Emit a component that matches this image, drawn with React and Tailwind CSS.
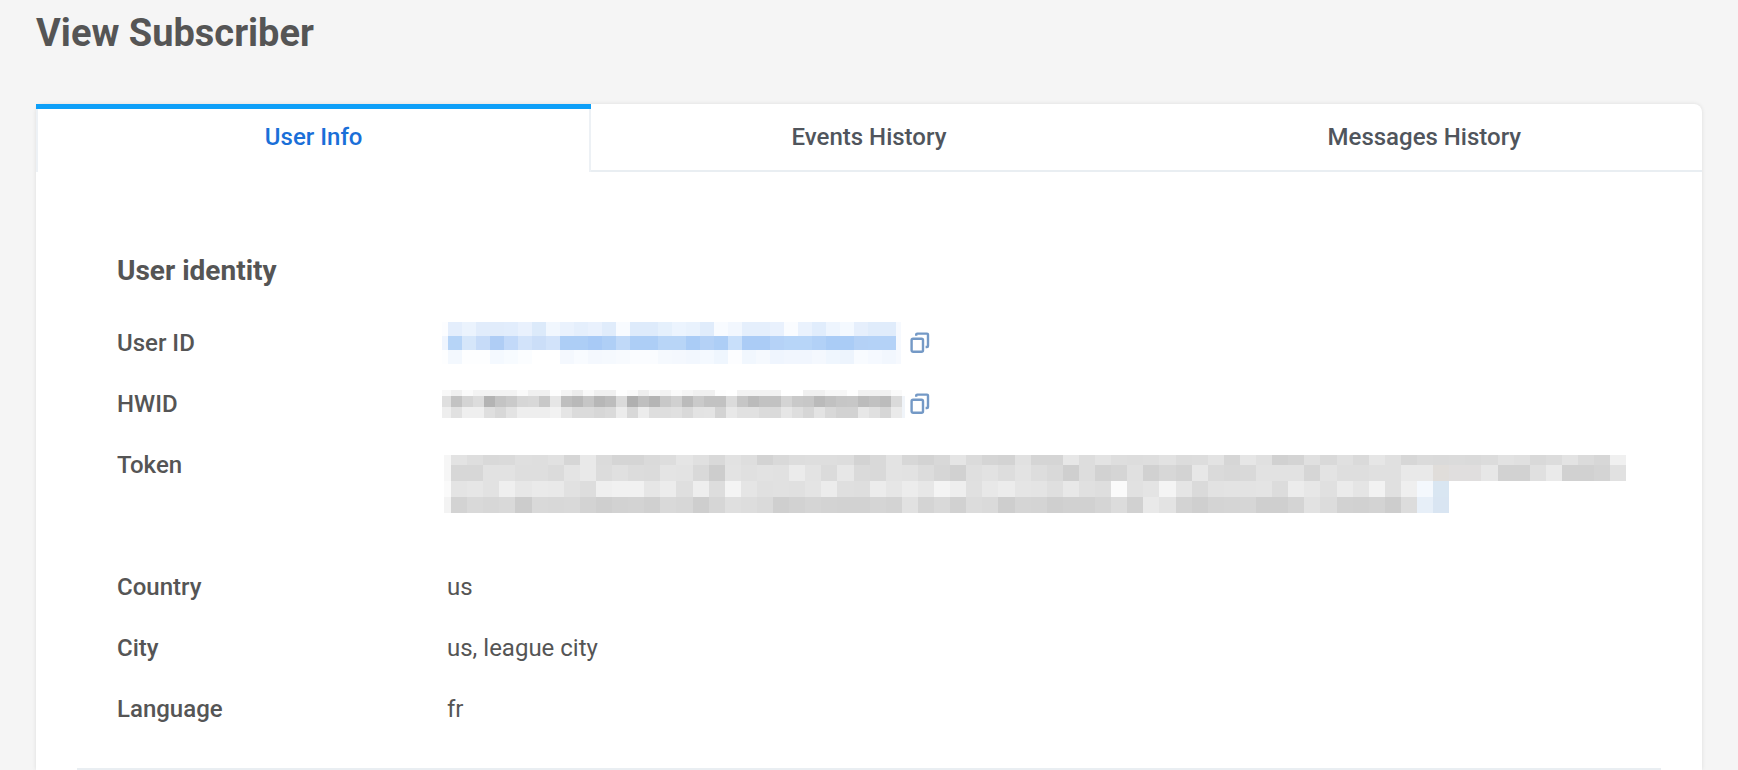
import { useState } from "react";

const tabs = ["User Info", "Events History", "Messages History"];

// Every mosaic row: top, height and one colour per cell. Two-digit values are grey levels.
const userIdRows = [
  {
    y: 0,
    h: 14,
    edge: "fcfdff",
    cells:
      "e3eefc eaf3fd e0ecfb e0ecfb e1edfc e8f1fd dbe9fa f1f7fe e9f2fd e4effc e8f1fd dfebfb f8fbff ddeafb ddeafb e4f0fc ecf4fe e8f2fd dfecfb f8fbff f2f7fe e4effc e4effc e8f1fd fafcff e9f2fd e0edfc eef5fe f4f9ff e5effc dfecfb dfecfb",
  },
  {
    y: 14,
    h: 14,
    edge: "eff5fe",
    cells:
      "b3d2f7 d3e5fa c3daf8 abcbf5 bfd8f9 d0e2fa c9ddf8 d0e2fa a9ccf6 a9ccf6 a4c8f6 abcdf6 bdd7f8 a9ccf6 a9ccf6 b5d3f7 b5d3f7 a6caf6 b0cff6 a9ccf6 c6defa a7caf6 a7caf6 b2d0f7 b4d3f8 b4d3f8 aecff7 a6caf6 a6caf6 b0cff6 b0d0f7 b0d0f7",
  },
  {
    y: 28,
    h: 14,
    edge: "fdfeff",
    cells:
      "f3f8fe fdfeff fdfeff f4f9ff f7fbff fbfdff ffffff ffffff f4f8fe f8fbff f4f8fe f5f9fe f7fafe fafcff fafcff f5f9fe f4f8fe f2f7fe f4f9ff eff6fe fcfdff f1f7fe f5f9fe eff5fe f1f6fe f1f6fe f4f8fe eff6fe edf4fd f8fbff f5f9ff f2f7fe",
  },
];

const hwidRows = [
  {
    y: 0,
    h: 6,
    edge: "f8",
    cells:
      "f0 fa f3 f3 f3 f3 fa f0 f0 fd f4 eb f9 f0 f0 fe fa ee f8 f2 fa f5 f0 f0 fd ff f2 f2 f2 f2 ff ff f0 f0 f7 f7 fe f1 f1 f1 fa",
  },
  {
    y: 6,
    h: 11,
    edge: "de",
    cells:
      "c0 d2 db b0 c1 c8 d4 d6 c6 e5 bc b6 c4 b4 ba d9 ac bc b2 c6 ce b8 c8 bf bf da c4 b8 bf bf d2 c7 c5 b7 be c4 c5 b9 be b9 d9",
  },
  {
    y: 17,
    h: 11,
    edge: "ee",
    cells:
      "e0 ef ef de d6 e2 ee ee ee f2 e4 da da d5 d9 eb d6 ec dd dd df d7 e2 e3 d1 e7 e0 e0 da d9 e5 dd d4 e2 d6 d0 d0 e6 df d4 e9",
  },
];

const tokenRows = [
  {
    y: 0,
    h: 10,
    edge: "f6",
    cells:
      "e2 dd d7 d9 de dd e0 d4 e8 da d3 d3 d9 dc e4 df d8 e1 dd d1 d8 dc dd dd dc d1 d7 e2 d5 d1 d6 e4 da d3 d1 e0 d3 d3 e6 dc e2 dd dc dd e1 db dc e2 d4 e5 df cf d2 df d8 df d9 e5 df d5 da d9 da d9 db e1 df d7 db e2 da d5 f0",
  },
  {
    y: 10,
    h: 16,
    edge: "f6",
    cells:
      "d5 d5 e1 e1 dd dd da e3 e8 db df db da e3 e2 d8 cb e2 df e1 e0 ea e2 da e6 d9 d7 e2 e1 db d4 cf de e1 dc e2 dc d7 cd dc d0 d3 df cf d5 d1 e6 d9 d6 d8 e1 e1 e1 d4 e2 dd dd df df e8 e8 dfdcd9 dfdddd dfdddd e6 d0 d0 df e9 cf cf d2 e0",
  },
  {
    y: 26,
    h: 16,
    edge: "fa",
    cells:
      "e3 e5 e1 ef e6 e9 e8 e0 dc ef f1 f1 e5 eb de ee dc f4 e4 df e0 df e3 ec de dd eb e5 eb e6 f4 ee df e7 eb e4 e3 de e7 df dd fa e0 e3 f4 e4 d9 e1 e2 e2 e3 db eb e6 df ea e4 f2 df ef f4f8fd d8e5f2",
  },
  {
    y: 42,
    h: 16,
    edge: "f3",
    cells:
      "d1 d7 d5 d7 ca d8 d6 d7 d1 cd d0 d1 ce d7 d5 cc d4 de dc d9 cd d0 d3 d1 d0 d0 d3 d1 e0 d2 d7 cf db d9 cc d3 d2 cd cf cf d3 db cf e8 e2 d1 cd d2 d3 d4 cd cd d2 e1 db d0 cf d1 cb db e6eff8 d8e4f2",
  },
];

const hex = (c) => (c.length === 2 ? `#${c}${c}${c}` : `#${c}`);

function Mosaic({ label, rows, edge, cell, width, height, tail, className }) {
  return (
    <svg
      role="img"
      aria-label={label}
      viewBox={`0 0 ${width} ${height}`}
      preserveAspectRatio="none"
      shapeRendering="crispEdges"
      className={className}
    >
      {rows.map((row) => {
        const cells = row.cells.split(" ");
        return (
          <g key={row.y}>
            <rect x={0} y={row.y} width={edge} height={row.h} fill={hex(row.edge)} />
            {cells.map((c, i) => {
              const x = Math.round(edge + i * cell);
              const next = Math.round(edge + (i + 1) * cell);
              return <rect key={i} x={x} y={row.y} width={next - x} height={row.h} fill={hex(c)} />;
            })}
          </g>
        );
      })}
      {tail && <rect x={tail.x} y={tail.y} width={width - tail.x} height={tail.h} fill={tail.fill} />}
    </svg>
  );
}

function CopyButton({ label }) {
  return (
    <button type="button" aria-label={label} className="shrink-0 cursor-pointer text-[#7499c6]">
      <svg viewBox="0 0 20 22" fill="none" stroke="currentColor" strokeWidth="2.4" className="h-[22px] w-5">
        <rect x="1.6" y="6.8" width="11.4" height="13" rx="1.5" />
        <path d="M6.2 3.8V2.6a1 1 0 0 1 1-1H17a1 1 0 0 1 1 1V14a1 1 0 0 1-1 1h-1.4" />
      </svg>
    </button>
  );
}

function Row({ label, tall, children }) {
  return (
    <div className={tall ? "flex h-[122px]" : "flex h-[61px]"}>
      <dt className="w-[330px] shrink-0 text-2xl font-medium">{label}</dt>
      <dd className="flex h-8 min-w-0 flex-1 items-center text-2xl">{children}</dd>
    </div>
  );
}

export default function App() {
  const [active, setActive] = useState(0);

  return (
    <div className="min-h-screen bg-[#f5f5f5] px-9 pt-[9px] font-[Roboto,sans-serif] text-[#555555]">
      <h1 className="text-[38px] leading-12 font-bold">View Subscriber</h1>

      <main className="mt-[47px] rounded-t-lg bg-white shadow-[0_0_4px_rgba(0,0,0,0.1)]">
        <div role="tablist" className="grid grid-cols-3">
          {tabs.map((tab, i) => (
            <button
              key={tab}
              type="button"
              role="tab"
              aria-selected={i === active}
              onClick={() => setActive(i)}
              className={
                i === active
                  ? "flex h-[68px] cursor-pointer border-t-5 border-t-[#0d9ff8] text-2xl font-medium text-[#1a6fd8]"
                  : "flex h-[68px] cursor-pointer border-b-2 border-b-[#e9eef2] text-2xl font-medium text-[#50555c]"
              }
            >
              <span
                className={
                  i === active
                    ? "flex h-full w-full items-center justify-center border-x-2 border-[#edf1f5] pb-2"
                    : "flex h-full w-full items-center justify-center"
                }
              >
                {tab}
              </span>
            </button>
          ))}
        </div>

        <section className="mx-[41px] border-b-2 border-[#e9eef2] pt-[81px] pb-[14px] pl-10">
          <h2 className="text-[28px] leading-9 font-bold">User identity</h2>
          <dl className="mt-[38px]">
            <Row label="User ID">
              <Mosaic
                label="Hidden user ID"
                rows={userIdRows}
                edge={6}
                cell={14}
                width={459}
                height={42}
                tail={{ x: 454, y: 0, h: 42, fill: "#f6f9fe" }}
                className="-ml-[5px] h-[42px] w-[459px] opacity-95"
              />
              <span className="w-[9px]" />
              <CopyButton label="Copy user ID" />
            </Row>
            <Row label="HWID">
              <Mosaic
                label="Hidden HWID"
                rows={hwidRows}
                edge={9}
                cell={11}
                width={463}
                height={28}
                tail={{ x: 460, y: 6, h: 22, fill: "#f0f4f9" }}
                className="-ml-[5px] h-7 w-[463px] opacity-95"
              />
              <span className="w-[5px]" />
              <CopyButton label="Copy HWID" />
            </Row>
            <Row label="Token" tall>
              <Mosaic
                label="Hidden token"
                rows={tokenRows}
                edge={7}
                cell={16.1}
                width={1182}
                height={58}
                className="-ml-[3px] mt-[6px] h-[58px] w-full max-w-[1182px] self-start opacity-95"
              />
            </Row>
            <Row label="Country">us</Row>
            <Row label="City">us, league city</Row>
            <Row label="Language">fr</Row>
          </dl>
        </section>
      </main>
    </div>
  );
}
